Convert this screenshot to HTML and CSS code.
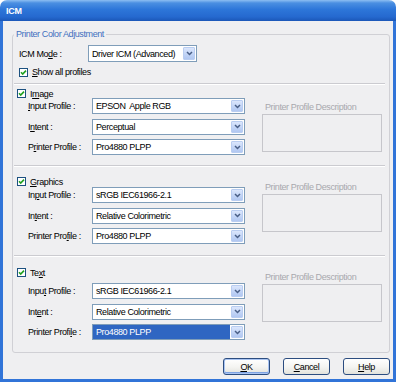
FILE: index.html
```html
<!DOCTYPE html>
<html lang="en">
<head>
    <meta charset="UTF-8">
    <title>ICM</title>
    <link rel="stylesheet" href="styles.css">
</head>
<body>

    <div class="window">
        <div class="titlebar"><span class="title">ICM</span></div>

        <div class="client">
            <fieldset class="group">
                <legend>Printer Color Adjustment</legend>

                <!-- ICM mode -->
                <div class="mode-row">
                    <span class="mode-label">ICM Mo<u>d</u>e :</span>
                    <div class="combo combo-mode">
                        <span class="combo-text">Driver ICM (Advanced)</span>
                        <span class="combo-btn"><svg width="7" height="5" viewBox="0 0 7 5"><path d="M1 1l2.5 2.5L6 1" fill="none" stroke="#4a5f86" stroke-width="1.5"/></svg></span>
                    </div>
                </div>
                <div class="check-row show-all">
                    <svg class="check" width="9" height="9" viewBox="0 0 9 9"><rect x=".5" y=".5" width="8" height="8" fill="#fff" stroke="#1c5180"/><path d="M2 4.3l1.7 1.8L7 2.6" fill="none" stroke="#21a121" stroke-width="1.6"/></svg>
                    <span><u>S</u>how all profiles</span>
                </div>

                <!-- Image -->
                <div class="section section-image">
                    <div class="section-fields">
                        <div class="check-row">
                            <svg class="check" width="9" height="9" viewBox="0 0 9 9"><rect x=".5" y=".5" width="8" height="8" fill="#fff" stroke="#1c5180"/><path d="M2 4.3l1.7 1.8L7 2.6" fill="none" stroke="#21a121" stroke-width="1.6"/></svg>
                            <span>I<u>m</u>age</span>
                        </div>
                        <div class="fields">
                            <div class="field-row">
                                <span class="field-label"><u>I</u>nput Profile :</span>
                                <div class="combo"><span class="combo-text">EPSON&nbsp; Apple RGB</span><span class="combo-btn"><svg width="7" height="5" viewBox="0 0 7 5"><path d="M1 1l2.5 2.5L6 1" fill="none" stroke="#4a5f86" stroke-width="1.5"/></svg></span></div>
                            </div>
                            <div class="field-row">
                                <span class="field-label">I<u>n</u>tent :</span>
                                <div class="combo"><span class="combo-text">Perceptual</span><span class="combo-btn"><svg width="7" height="5" viewBox="0 0 7 5"><path d="M1 1l2.5 2.5L6 1" fill="none" stroke="#4a5f86" stroke-width="1.5"/></svg></span></div>
                            </div>
                            <div class="field-row">
                                <span class="field-label">P<u>r</u>inter Profile :</span>
                                <div class="combo"><span class="combo-text">Pro4880 PLPP</span><span class="combo-btn"><svg width="7" height="5" viewBox="0 0 7 5"><path d="M1 1l2.5 2.5L6 1" fill="none" stroke="#4a5f86" stroke-width="1.5"/></svg></span></div>
                            </div>
                        </div>
                    </div>
                    <div class="desc">
                        <div class="desc-label">Printer Profile Description</div>
                        <div class="desc-box"></div>
                    </div>
                </div>

                <!-- Graphics -->
                <div class="section section-graphics">
                    <div class="section-fields">
                        <div class="check-row">
                            <svg class="check" width="9" height="9" viewBox="0 0 9 9"><rect x=".5" y=".5" width="8" height="8" fill="#fff" stroke="#1c5180"/><path d="M2 4.3l1.7 1.8L7 2.6" fill="none" stroke="#21a121" stroke-width="1.6"/></svg>
                            <span><u>G</u>raphics</span>
                        </div>
                        <div class="fields">
                            <div class="field-row">
                                <span class="field-label">In<u>p</u>ut Profile :</span>
                                <div class="combo"><span class="combo-text">sRGB IEC61966-2.1</span><span class="combo-btn"><svg width="7" height="5" viewBox="0 0 7 5"><path d="M1 1l2.5 2.5L6 1" fill="none" stroke="#4a5f86" stroke-width="1.5"/></svg></span></div>
                            </div>
                            <div class="field-row">
                                <span class="field-label">In<u>t</u>ent :</span>
                                <div class="combo"><span class="combo-text">Relative Colorimetric</span><span class="combo-btn"><svg width="7" height="5" viewBox="0 0 7 5"><path d="M1 1l2.5 2.5L6 1" fill="none" stroke="#4a5f86" stroke-width="1.5"/></svg></span></div>
                            </div>
                            <div class="field-row">
                                <span class="field-label">Printer Pro<u>f</u>ile :</span>
                                <div class="combo"><span class="combo-text">Pro4880 PLPP</span><span class="combo-btn"><svg width="7" height="5" viewBox="0 0 7 5"><path d="M1 1l2.5 2.5L6 1" fill="none" stroke="#4a5f86" stroke-width="1.5"/></svg></span></div>
                            </div>
                        </div>
                    </div>
                    <div class="desc">
                        <div class="desc-label">Printer Profile Description</div>
                        <div class="desc-box"></div>
                    </div>
                </div>

                <!-- Text -->
                <div class="section section-text">
                    <div class="section-fields">
                        <div class="check-row">
                            <svg class="check" width="9" height="9" viewBox="0 0 9 9"><rect x=".5" y=".5" width="8" height="8" fill="#fff" stroke="#1c5180"/><path d="M2 4.3l1.7 1.8L7 2.6" fill="none" stroke="#21a121" stroke-width="1.6"/></svg>
                            <span>Te<u>x</u>t</span>
                        </div>
                        <div class="fields">
                            <div class="field-row">
                                <span class="field-label">Inpu<u>t</u> Profile :</span>
                                <div class="combo"><span class="combo-text">sRGB IEC61966-2.1</span><span class="combo-btn"><svg width="7" height="5" viewBox="0 0 7 5"><path d="M1 1l2.5 2.5L6 1" fill="none" stroke="#4a5f86" stroke-width="1.5"/></svg></span></div>
                            </div>
                            <div class="field-row">
                                <span class="field-label">Int<u>e</u>nt :</span>
                                <div class="combo"><span class="combo-text">Relative Colorimetric</span><span class="combo-btn"><svg width="7" height="5" viewBox="0 0 7 5"><path d="M1 1l2.5 2.5L6 1" fill="none" stroke="#4a5f86" stroke-width="1.5"/></svg></span></div>
                            </div>
                            <div class="field-row">
                                <span class="field-label">Printer Profi<u>l</u>e :</span>
                                <div class="combo"><span class="combo-text selected">Pro4880 PLPP</span><span class="combo-btn"><svg width="7" height="5" viewBox="0 0 7 5"><path d="M1 1l2.5 2.5L6 1" fill="none" stroke="#4a5f86" stroke-width="1.5"/></svg></span></div>
                            </div>
                        </div>
                    </div>
                    <div class="desc">
                        <div class="desc-label">Printer Profile Description</div>
                        <div class="desc-box"></div>
                    </div>
                </div>
            </fieldset>

            <div class="buttons">
                <button class="btn btn-default"><u>O</u>K</button>
                <button class="btn"><u>C</u>ancel</button>
                <button class="btn"><u>H</u>elp</button>
            </div>
        </div>
    </div>

</body>
</html>
```

FILE: styles.css
```css
* {
    box-sizing: border-box;
}

body {
    margin: 0;
    background-color: #ffffff;
    font-family: "Liberation Sans", Arial, sans-serif;
    font-size: 9px;
    letter-spacing: -0.4px;
    color: #000;
}

.window {
    width: 396px;
    height: 382px;
    display: flex;
    flex-direction: column;
}

.titlebar {
    height: 21px;
    padding-left: 6px;
    display: flex;
    align-items: center;
    border-radius: 7px 7px 0 0;
    background: linear-gradient(#8dbef2 0, #4a8fe2 3px, #2d76d9 45%, #2569cf 80%, #1b57b8 100%);
}

.title {
    color: #fff;
    font-weight: bold;
    letter-spacing: -0.2px;
}

.client {
    flex: 1;
    background-color: #efeff1;
    border: 3px solid #3174d8;
    border-top: none;
    padding: 8px 3px 0 9px;
}

/* group box */
.group {
    width: 378px;
    margin: 0;
    padding: 0;
    border: 1px solid #d0d0d5;
    border-radius: 3px;
}

.group legend {
    margin-left: 1px;
    padding: 0 2px;
    line-height: 10px;
    color: #3f6fbf;
}

.mode-row {
    display: flex;
    align-items: center;
    height: 17px;
    margin-top: 6px;
    padding-left: 6px;
}

.mode-label {
    width: 69px;
}

.check-row {
    display: flex;
    align-items: center;
    height: 9px;
    line-height: 10px;
}

.check {
    flex: none;
    margin-right: 4px;
}

.show-all {
    margin-top: 5px;
    height: 10px;
    padding-left: 6px;
}

/* combo boxes */
.combo {
    display: flex;
    width: 153px;
    height: 16px;
    border: 1px solid #7f9db9;
    background-color: #fff;
}

.combo-mode {
    width: 109px;
    height: 17px;
}

.combo-text {
    flex: 1;
    padding-left: 3px;
    display: flex;
    align-items: center;
    white-space: nowrap;
}

.combo-text.selected {
    background-color: #2f66c2;
    color: #fff;
}

.combo-btn {
    width: 12px;
    margin: 1px;
    display: flex;
    align-items: center;
    justify-content: center;
    border: 1px solid #b9cdf1;
    border-radius: 1px;
    background: linear-gradient(#dbe6fc, #c0d3f6 60%, #b1c7f1);
}

/* profile sections */
.section {
    display: flex;
    align-items: flex-start;
    margin: 6px 4px 0 1px;
    border-top: 1px solid #cbcbd0;
    box-shadow: inset 0 1px 0 #fff;
}

.section + .section {
    margin-top: 0;
}

.section-fields {
    width: 231px;
}

.section .check-row {
    padding-left: 3px;
}

.fields {
    display: flex;
    flex-direction: column;
    gap: 4.5px;
}

.field-row {
    display: flex;
    align-items: center;
    height: 16px;
    padding-left: 14px;
}

.field-label {
    width: 64px;
}

.desc {
    width: 120px;
    margin-left: 17px;
    margin-top: 16px;
}

.desc-label {
    line-height: 10px;
    margin-bottom: 2px;
    padding-left: 3px;
    color: #a8a8ae;
}

.desc-box {
    height: 38px;
    border: 1px solid #c6c6cb;
}

.section-image { padding-bottom: 10px; }
.section-image .check-row { margin-top: 5px; }
.section-image .desc { margin-top: 18px; }

.section-graphics { padding-bottom: 11px; }
.section-graphics .check-row { margin-top: 11px; }
.section-graphics .fields { margin-top: 1px; }

.section-text { padding-bottom: 12px; }
.section-text .check-row { margin-top: 12px; }
.section-text .fields { margin-top: 6px; }

/* dialog buttons */
.buttons {
    display: flex;
    justify-content: flex-end;
    gap: 13px;
    margin-top: 5px;
}

.btn {
    width: 47px;
    height: 17px;
    padding: 0;
    font: inherit;
    letter-spacing: inherit;
    color: #000;
    border: 1px solid #2c4d80;
    border-radius: 3px;
    background: linear-gradient(#ffffff, #f4f4f1 55%, #e2e2dc);
}

.btn-default {
    box-shadow: inset 0 0 0 1px #a9c4f2, inset 0 -1px 0 1px #7ea3e3;
}
```
